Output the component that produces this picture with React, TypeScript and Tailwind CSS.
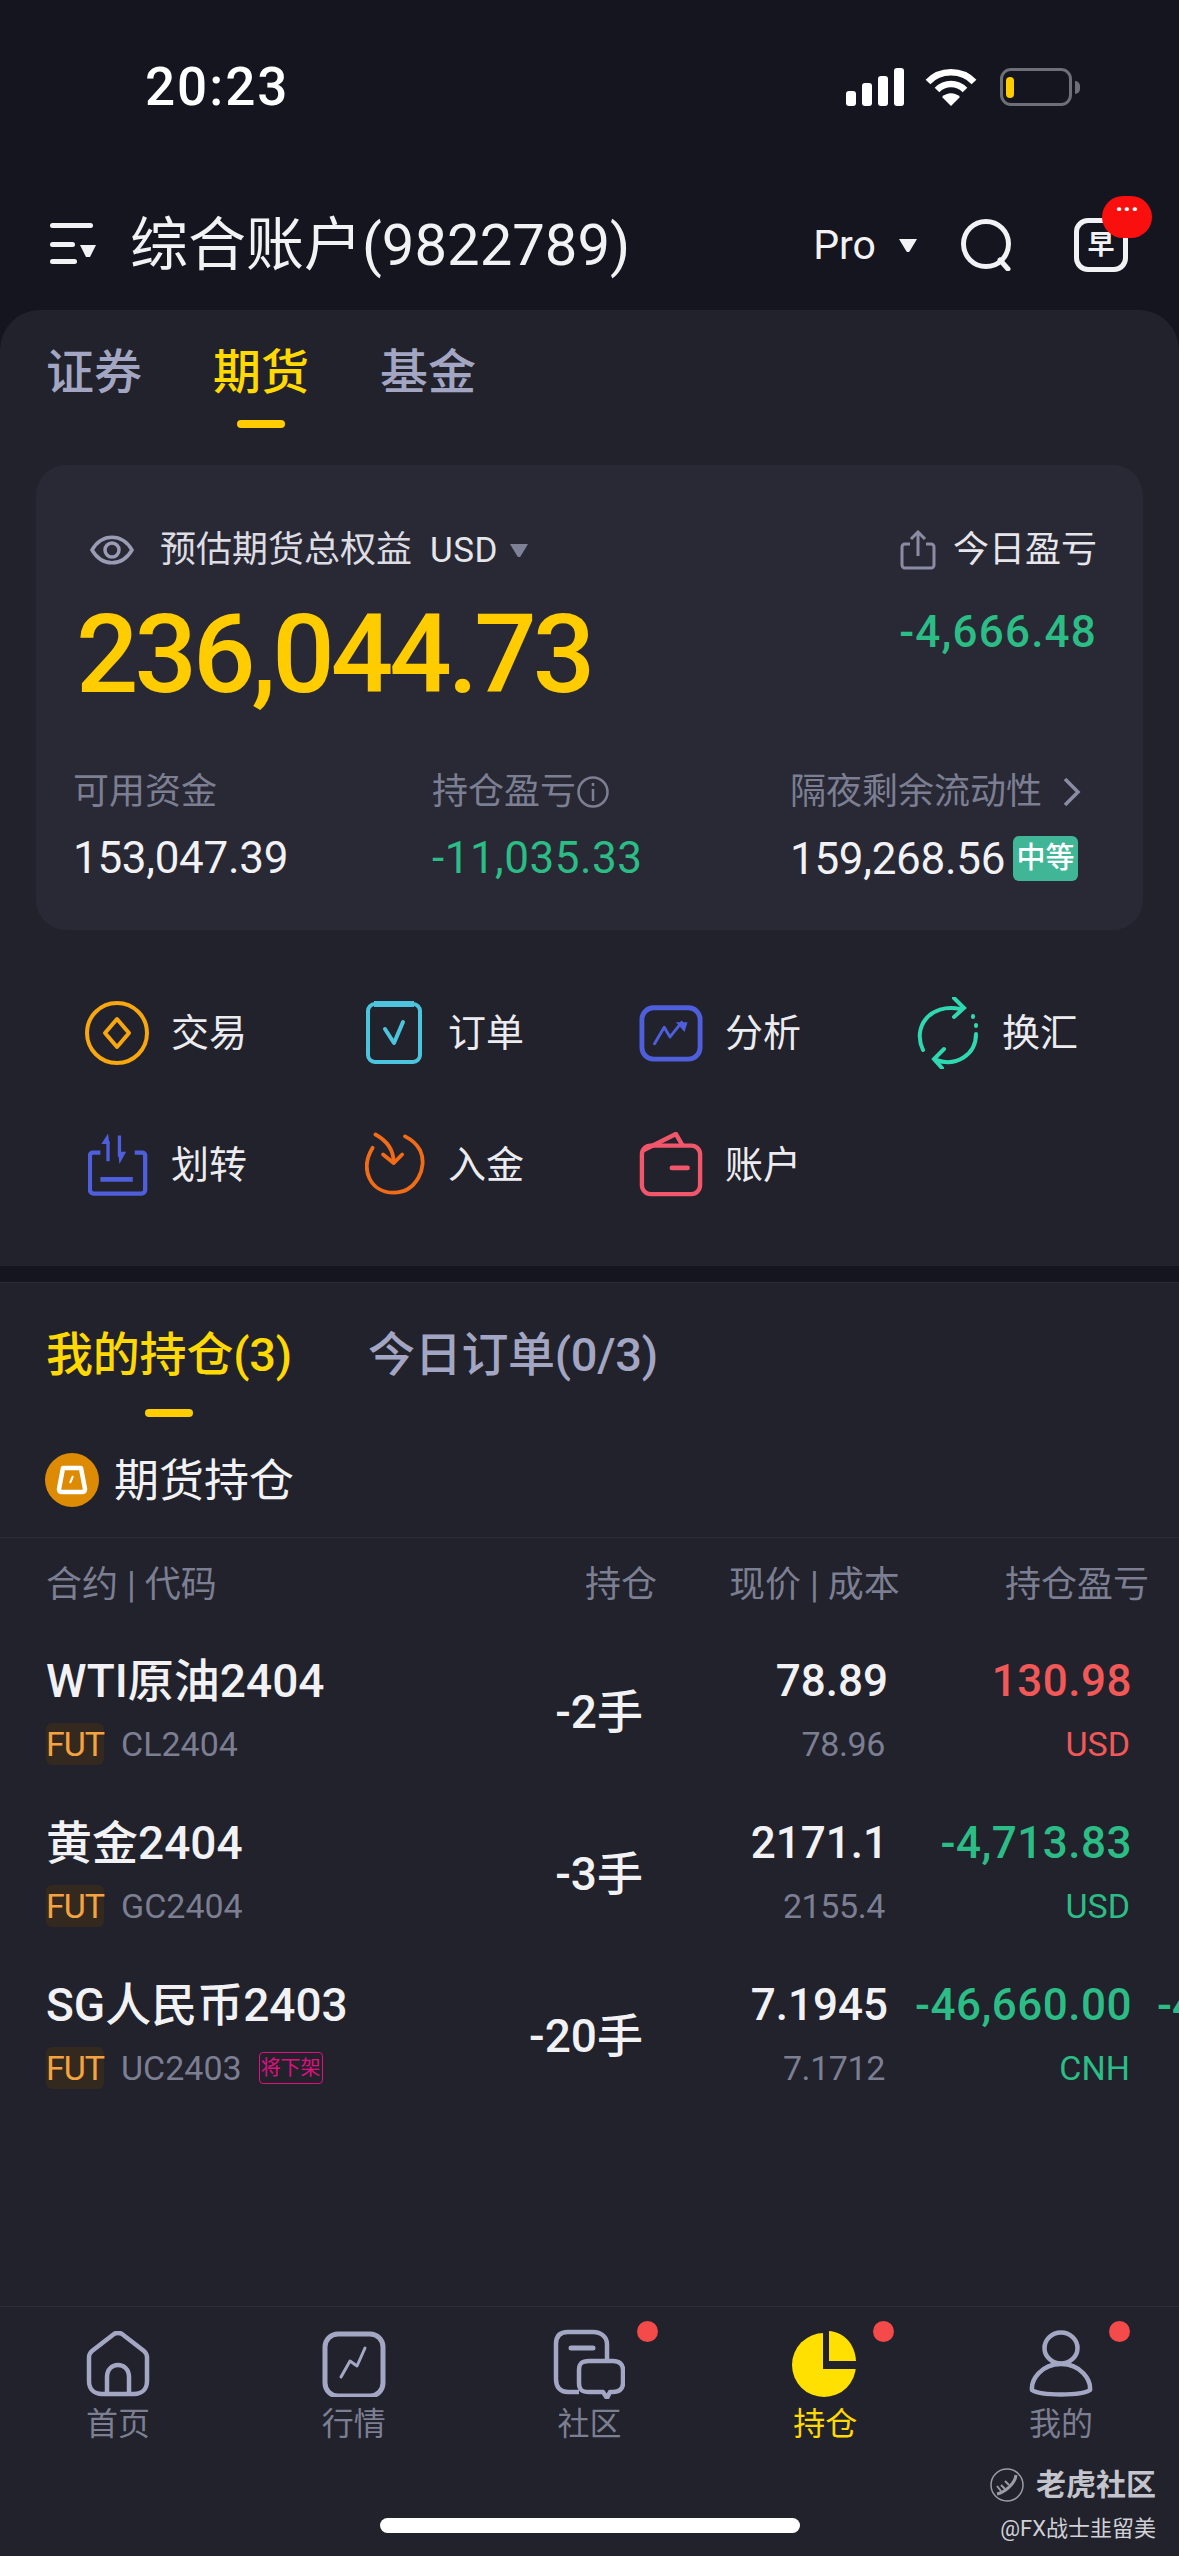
const FONT = "font-['Roboto','Noto_Sans_CJK_SC',sans-serif]";

function MenuIcon() {
  return (
    <svg width="46" height="44" viewBox="0 0 46 44" fill="#f2f2f5">
      <rect x="0" y="0" width="43" height="5" rx="2.5" />
      <rect x="0" y="19" width="25" height="5" rx="2.5" />
      <rect x="0" y="36" width="27" height="5" rx="2.5" />
      <path d="M30 22h16l-6 12h-4z" />
    </svg>
  );
}

function StatusIcons() {
  return (
    <div className="flex items-center">
      <svg width="58" height="38" viewBox="0 0 58 38" fill="#fff">
        <rect x="0" y="23" width="10" height="15" rx="3" />
        <rect x="16" y="15" width="10" height="23" rx="3" />
        <rect x="32" y="8" width="10" height="30" rx="3" />
        <rect x="48" y="0" width="10" height="38" rx="3" />
      </svg>
      <svg className="ml-[21px]" width="52" height="38" viewBox="0 0 52 38" fill="none" stroke="#fff" strokeWidth="6.5">
        <path d="M3 14C15 1 37 1 49 14" />
        <path d="M12 22C20 14 32 14 40 22" />
        <path d="M26 38 17 29C22 24 30 24 35 29Z" fill="#fff" stroke="none" />
      </svg>
      <div className="ml-[23px] flex items-center">
        <div className="flex h-[38px] w-[72px] items-center rounded-[11px] border-[3px] border-[#6d6e76] pl-[3px]">
          <div className="h-[21px] w-[8px] rounded-full bg-[#ffcc00]" />
        </div>
        <div className="ml-[3px] h-[13px] w-[5px] rounded-r-full bg-[#6d6e76]" />
      </div>
    </div>
  );
}

function Caret({ color, w = 18, h = 13 }: { color: string; w?: number; h?: number }) {
  return (
    <svg width={w} height={h} viewBox="0 0 18 13" fill={color}>
      <path d="M0 0h18L10.5 12.5q-1.500 1-3 0z" />
    </svg>
  );
}

function TradeIcon() {
  return (
    <svg width="64" height="64" viewBox="0 0 64 64" fill="none" stroke="#f8a70f" strokeWidth="4">
      <circle cx="32" cy="32" r="30" />
      <path d="M32 18 44 32 32 46 20 32Z" strokeLinejoin="round" />
    </svg>
  );
}

function OrderIcon() {
  return (
    <svg width="64" height="64" viewBox="0 0 64 64" fill="none" stroke="#4cc4de" strokeWidth="4">
      <rect x="6" y="3" width="52" height="58" rx="7" />
      <path d="M12 3h40" strokeWidth="6" />
      <path d="M23 28 32 42 41 21" strokeLinecap="round" strokeLinejoin="round" />
    </svg>
  );
}

function AnalysisIcon() {
  return (
    <svg width="66" height="64" viewBox="0 0 66 64" fill="none" stroke="#4f5fdc" strokeWidth="5">
      <rect x="3" y="6" width="60" height="53" rx="12" />
      <path d="M16 43 26 26 32 36 44 21" strokeWidth="3" strokeLinecap="round" strokeLinejoin="round" />
      <path d="M38 21H50L47 31Z" fill="#4f5fdc" stroke="none" />
    </svg>
  );
}

function ExchangeIcon() {
  return (
    <svg width="64" height="72" viewBox="0 0 64 72" fill="none" stroke="#2fd8b0" strokeWidth="4" strokeLinecap="round">
      <path d="M7 53C-4 30 14 6 44 12" />
      <path d="M38 1 48 11 38 20" />
      <path d="M60 37C60 58 40 70 20 63" />
      <path d="M28 52 18 62 26 71" />
      <path d="M57 19v1M60 28v1" />
    </svg>
  );
}

function TransferIcon() {
  return (
    <svg className="ml-[3px]" width="64" height="66" viewBox="0 0 64 66" fill="none" stroke="#4f5fdc" strokeWidth="4.500">
      <path d="M13 20H5a3 3 0 0 0-3 3v36a4 4 0 0 0 4 4h50a4 4 0 0 0 4-4V23a3 3 0 0 0-3-3h-8" />
      <path d="M21 8V29M33 2V24" strokeWidth="3.500" />
      <path d="M21 0 14 11H22.500ZM33 32 40 19H31.500Z" fill="#4f5fdc" stroke="none" />
      <path d="M13 48H47" strokeWidth="5" />
    </svg>
  );
}

function DepositIcon() {
  return (
    <svg className="ml-[3px]" width="64" height="66" viewBox="0 0 64 66" fill="none" stroke="#f26c17" strokeWidth="4" strokeLinecap="round">
      <path d="M8 15C-6 38 6 62 30 62 54 62 66 35 58 18 54 10 48 6 42 3" />
      <path d="M11 1C22 7 30 16 30 30" />
      <path d="M19 22 30 31 39 22" strokeLinejoin="round" />
    </svg>
  );
}

function WalletIcon() {
  return (
    <svg width="66" height="66" viewBox="0 0 66 66" fill="none" stroke="#f2566a" strokeWidth="4.500">
      <rect x="3" y="13" width="60" height="50" rx="9" />
      <path d="M4 18 38 1 45 13" strokeLinejoin="round" />
      <path d="M34 36H50" strokeWidth="5" strokeLinecap="round" />
    </svg>
  );
}

function HomeIcon() {
  return (
    <svg width="64" height="66" viewBox="0 0 64 66" fill="none" stroke="#a4a7c4" strokeWidth="4.500">
      <path d="M3 26C3 24 4 22 6 20L28 3C30 1.500 34 1.500 36 3L58 20C60 22 61 24 61 26V50C61 58 56 63 48 63H16C8 63 3 58 3 50Z" strokeLinejoin="round" />
      <path d="M21 63V46C21 30 43 30 43 46V63" />
    </svg>
  );
}

function MarketIcon() {
  return (
    <svg width="64" height="66" viewBox="0 0 64 66" fill="none" stroke="#a4a7c4" strokeWidth="5">
      <rect x="3" y="3" width="58" height="62" rx="13" />
      <path d="M19 46 28 30 35 35 43 17" strokeWidth="3" strokeLinecap="round" strokeLinejoin="round" />
    </svg>
  );
}

function CommunityIcon() {
  return (
    <svg width="72" height="70" viewBox="0 0 72 70" fill="none" stroke="#a4a7c4" strokeWidth="4.500">
      <path d="M26 63H15C7 63 3 58 3 50V15C3 7 7 3 15 3H40C48 3 54 8 54 15V30" />
      <path d="M18 19H40" strokeWidth="5" strokeLinecap="round" />
      <path d="M36 32H60C66 32 70 35 70 41V54C70 60 66 63 60 63H57L54 69 50 63H36C28 63 26 60 26 54V41C26 35 28 32 36 32Z" strokeLinejoin="round" />
    </svg>
  );
}

function HoldingIcon() {
  return (
    <svg width="66" height="68" viewBox="0 0 66 68" fill="none">
      <circle cx="32" cy="35" r="32" fill="#ffe000" />
      <path d="M31 0V39H65V36C65 14 50 0 31 0Z" fill="#21222c" />
      <path d="M37 1C52 2 63 14 64 31H37Z" fill="#ffe000" />
    </svg>
  );
}

function MineIcon() {
  return (
    <svg width="64" height="68" viewBox="0 0 64 68" fill="none" stroke="#a4a7c4" strokeWidth="4.500">
      <ellipse cx="32" cy="18" rx="16.500" ry="15.500" />
      <path d="M32 34C12 34 2 50 3 60 12 66 52 66 61 60 62 50 52 34 32 34Z" strokeLinejoin="round" />
    </svg>
  );
}

function TigerLogo() {
  return (
    <svg width="36" height="34" viewBox="0 0 36 34" fill="none" stroke="#9b9ca6" strokeWidth="1.500">
      <circle cx="18" cy="17" r="16" />
      <path d="M8 26C16 24 26 16 27 7" strokeWidth="3" />
      <path d="M8 18 12 23M12 17 16 21M16 13 20 17" strokeWidth="2" />
    </svg>
  );
}

const actions = [
  { label: '交易', icon: <TradeIcon /> },
  { label: '订单', icon: <OrderIcon /> },
  { label: '分析', icon: <AnalysisIcon /> },
  { label: '换汇', icon: <ExchangeIcon /> },
  { label: '划转', icon: <TransferIcon /> },
  { label: '入金', icon: <DepositIcon /> },
  { label: '账户', icon: <WalletIcon /> },
];

const rows = [
  { name: 'WTI原油2404', code: 'CL2404', qty: '-2手', price: '78.89', cost: '78.96', pnl: '130.98', ccy: 'USD', up: true },
  { name: '黄金2404', code: 'GC2404', qty: '-3手', price: '2171.1', cost: '2155.4', pnl: '-4,713.83', ccy: 'USD', up: false },
  { name: 'SG人民币2403', code: 'UC2403', qty: '-20手', price: '7.1945', cost: '7.1712', pnl: '-46,660.00', ccy: 'CNH', up: false, delisting: true, ratio: '-4' },
];

const tabs = [
  { label: '首页', icon: <HomeIcon /> },
  { label: '行情', icon: <MarketIcon /> },
  { label: '社区', icon: <CommunityIcon />, dot: true },
  { label: '持仓', icon: <HoldingIcon />, dot: true, active: true },
  { label: '我的', icon: <MineIcon />, dot: true },
];

export default function App() {
  return (
    <div className={`${FONT} relative flex h-[2556px] w-[1179px] flex-col overflow-hidden bg-[#14151f] text-[#f2f2f5]`}>
      {/* Status bar */}
      <div className="flex h-[174px] shrink-0 items-center justify-between pl-[145px] pr-[99px]">
        <span className="text-[53px] font-medium leading-none tracking-[2px] text-white">20:23</span>
        <StatusIcons />
      </div>

      {/* Account header */}
      <div className="flex h-[136px] shrink-0 items-center pl-[50px] pr-[50px] pt-[6px]">
        <MenuIcon />
        <span className="ml-[34px] text-[58px] leading-none">综合账户(9822789)</span>
        <span className="ml-auto text-[41px] leading-none">Pro</span>
        <span className="ml-[23px]"><Caret color="#f2f2f5" /></span>
        <svg className="ml-[44px]" width="52" height="52" viewBox="0 0 52 52" fill="none" stroke="#f2f2f5" strokeWidth="5">
          <ellipse cx="25" cy="25" rx="22.500" ry="22.500" />
          <path d="M39 41 47 50" strokeLinecap="round" />
        </svg>
        <div className="relative ml-[61px] mr-[1px] flex h-[54px] w-[54px] items-center justify-center rounded-[14px] border-[5px] border-[#f2f2f5]">
          <span className="text-[27px] font-bold leading-none">早</span>
          <div className="absolute left-[23px] top-[-27px] flex h-[42px] w-[50px] items-start justify-center rounded-full bg-[#fa0f0f] text-[26px] font-bold leading-[26px] text-white">
            ···
          </div>
        </div>
      </div>

      {/* Account panel */}
      <div className="h-[956px] shrink-0 rounded-t-[40px] bg-[#21222c]">
        <div className="flex gap-[71px] pl-[46px] pt-[39px]">
          <span className="text-[48px] font-medium leading-[48px] text-[#a3a6c2]">证券</span>
          <div className="flex flex-col items-center">
            <span className="text-[48px] font-medium leading-[48px] text-[#ffd900]">期货</span>
            <div className="mt-[23px] h-[8px] w-[48px] rounded-full bg-[#ffcc00]" />
          </div>
          <span className="text-[48px] font-medium leading-[48px] text-[#a3a6c2]">基金</span>
        </div>

        <div className="mx-[36px] mt-[37px] h-[465px] rounded-[30px] bg-[#282935] pt-[65px]">
          <div className="flex justify-between pr-[46px]">
            <div className="pl-[40px]">
              <div className="flex h-[40px] items-center pl-[14px]">
                <svg width="44" height="36" viewBox="0 0 44 36" fill="none" stroke="#9a9cb4" strokeWidth="3.500">
                  <path d="M2 18C12 1 32 1 42 18 32 35 12 35 2 18Z" />
                  <circle cx="22" cy="18" r="7" />
                </svg>
                <span className="ml-[26px] text-[36px] leading-none text-[#dcdce2]">预估期货总权益</span>
                <span className="ml-[18px] text-[35px] leading-none tracking-[0.5px] text-[#e6e6ea]">USD</span>
                <span className="ml-[12px]"><Caret color="#7f8198" /></span>
              </div>
              <div className="mt-[30px] text-[110px] font-medium leading-[110px] tracking-[-4px] text-[#ffcc00]">236,044.73</div>
            </div>
            <div className="flex flex-col items-end">
              <div className="flex h-[40px] items-center">
                <svg width="36" height="40" viewBox="0 0 36 40" fill="none" stroke="#8a8ca3" strokeWidth="3">
                  <path d="M10 14H5a3 3 0 0 0-3 3v18a3 3 0 0 0 3 3h26a3 3 0 0 0 3-3V17a3 3 0 0 0-3-3h-5" />
                  <path d="M18 2V26M11 9 18 2 25 9" />
                </svg>
                <span className="ml-[17px] text-[36px] leading-none text-[#e6e6ea]">今日盈亏</span>
              </div>
              <div className="mt-[40px] text-[44px] font-medium leading-[44px] tracking-[1.2px] text-[#2bbd85]">-4,666.48</div>
            </div>
          </div>

          <div className="mt-[62px] grid grid-cols-[359px_358px_1fr] pl-[37px]">
            <span className="text-[36px] leading-[40px] text-[#7c7e92]">可用资金</span>
            <span className="flex items-center text-[36px] leading-[40px] text-[#7c7e92]">
              持仓盈亏
              <svg width="34" height="34" viewBox="0 0 34 34" fill="none" stroke="#7c7e92" strokeWidth="2.500">
                <circle cx="17" cy="17" r="14.500" />
                <path d="M17 14V26M17 8V11" />
              </svg>
            </span>
            <span className="flex items-center text-[36px] leading-[40px] text-[#7c7e92]">
              隔夜剩余流动性
              <svg className="ml-[20px]" width="20" height="32" viewBox="0 0 20 32" fill="none" stroke="#8a8ca3" strokeWidth="3.500">
                <path d="M3 3 16 16 3 29" />
              </svg>
            </span>
          </div>
          <div className="mt-[24px] grid grid-cols-[359px_358px_1fr] pl-[37px]">
            <span className="text-[44px] leading-[44px] tracking-[-0.3px]">153,047.39</span>
            <span className="text-[44px] leading-[44px] tracking-[0.5px] text-[#2bbd85]">-11,035.33</span>
            <div className="flex items-center">
              <span className="text-[44px] leading-[44px] tracking-[-0.3px]">159,268.56</span>
              <span className="ml-[8px] flex h-[45px] w-[65px] items-center justify-center rounded-[6px] bg-[#41b696] text-[29px] font-medium leading-none text-white">中等</span>
            </div>
          </div>
        </div>

        {/* Quick actions */}
        <div className="mt-[37px] grid grid-cols-[277px_277px_277px_1fr] pl-[85px]">
          {actions.map((a) => (
            <div key={a.label} className="flex h-[132px] items-center">
              <div className="flex w-[64px] justify-center">{a.icon}</div>
              <span className="ml-[22px] text-[38px] leading-none text-[#ececf0]">{a.label}</span>
            </div>
          ))}
        </div>
      </div>

      <div className="h-[17px] shrink-0 border-b border-[#2c2d38] bg-[#14151f]" />

      {/* Positions */}
      <div className="flex flex-1 flex-col bg-[#21222c]">
        <div className="flex gap-[76px] pl-[46px] pt-[48px]">
          <div className="flex flex-col items-center">
            <span className="text-[47px] font-medium leading-[48px] tracking-[-0.2px] text-[#ffd900]">我的持仓(3)</span>
            <div className="mt-[30px] h-[8px] w-[48px] rounded-full bg-[#ffcc00]" />
          </div>
          <span className="text-[47px] font-medium leading-[48px] tracking-[-0.3px] text-[#a3a6c2]">今日订单(0/3)</span>
        </div>

        <div className="mt-[36px] flex h-[54px] items-center pl-[45px]">
          <div className="flex h-[54px] w-[54px] items-center justify-center rounded-full bg-[#dd8a05]">
            <svg width="32" height="30" viewBox="0 0 32 30" fill="none" stroke="#fff" strokeWidth="4.500">
              <path d="M7 3H25L29 24Q29 27 26 27H6Q3 27 3 24Z" strokeLinejoin="round" />
              <path d="M17 11 14 18" strokeWidth="2" />
            </svg>
          </div>
          <span className="ml-[15px] pt-[2px] text-[45px] leading-none">期货持仓</span>
        </div>

        <div className="mt-[30px] border-t border-[#2c2d38]" />

        <div className="mt-[29px] flex h-[36px] items-center pl-[46px] text-[36px] leading-none text-[#7c7e92]">
          <span className="w-[539px]">合约 | 代码</span>
          <span className="w-[144px]">持仓</span>
          <span className="w-[276px]">现价 | 成本</span>
          <span>持仓盈亏</span>
        </div>

        <div className="mt-[55px] flex flex-col gap-[55px]">
          {rows.map((r) => (
            <div key={r.code} className="grid h-[107px] grid-cols-[397px_200px_245px_244px_1fr] items-center pl-[46px]">
              <div>
                <div className="text-[46px] font-medium leading-[46px]">{r.name}</div>
                <div className="mt-[19px] flex h-[42px] items-center">
                  <span className="flex h-[42px] w-[58px] items-center justify-center rounded-[6px] bg-[#33291f] text-[34px] leading-none tracking-[-1px] text-[#f5a340]">FUT</span>
                  <span className="ml-[17px] text-[34px] leading-none text-[#7c7e92]">{r.code}</span>
                  {r.delisting && (
                    <span className="ml-[17px] flex h-[32px] w-[64px] items-center justify-center rounded-[4px] border border-[#e0107f] text-[20px] leading-none text-[#e0107f]">将下架</span>
                  )}
                </div>
              </div>
              <div className="text-right text-[46px] font-medium leading-none">{r.qty}</div>
              <div className="text-right">
                <div className="text-[44px] font-medium leading-[46px]">{r.price}</div>
                <div className="mt-[19px] pr-[3px] text-[34px] leading-[42px] tracking-[-0.4px] text-[#7c7e92]">{r.cost}</div>
              </div>
              <div className={`text-right ${r.up ? 'text-[#f25858]' : 'text-[#2bbd85]'}`}>
                <div className="text-[44px] font-medium leading-[46px] tracking-[0.5px]">{r.pnl}</div>
                <div className="mt-[19px] pr-[2px] text-[34px] leading-[42px]">{r.ccy}</div>
              </div>
              {r.ratio && <div className="self-start whitespace-nowrap pl-[25px] text-[44px] font-medium leading-[46px] text-[#2bbd85]">{r.ratio}</div>}
            </div>
          ))}
        </div>

        {/* Tab bar */}
        <div className="mt-auto h-[250px] border-t border-[#2c2d38]">
          <div className="grid grid-cols-5 pt-[23px]">
            {tabs.map((t) => (
              <div key={t.label} className="flex flex-col items-center">
                <div className="relative flex h-[68px] w-[72px] items-center justify-center">
                  {t.icon}
                  {t.dot && <div className="absolute left-[84px] top-[-9px] h-[21px] w-[21px] rounded-full bg-[#f54a4a]" />}
                </div>
                <span className={`mt-[10px] text-[32px] leading-[32px] ${t.active ? 'text-[#ffd900]' : 'text-[#7c7e92]'}`}>{t.label}</span>
              </div>
            ))}
          </div>
          <div className="mx-auto mt-[78px] h-[15px] w-[420px] rounded-full bg-white" />
        </div>
      </div>

      {/* Watermark */}
      <div className="absolute left-[986px] top-[2468px] flex w-[170px] flex-col items-end">
        <div className="flex items-center">
          <TigerLogo />
          <span className="ml-[11px] text-[30px] font-bold leading-none text-[#c4c5cc]">老虎社区</span>
        </div>
        <span className="mt-[16px] text-[22px] leading-none text-[#d0d0d6]">@FX战士韭留美</span>
      </div>
    </div>
  );
}
